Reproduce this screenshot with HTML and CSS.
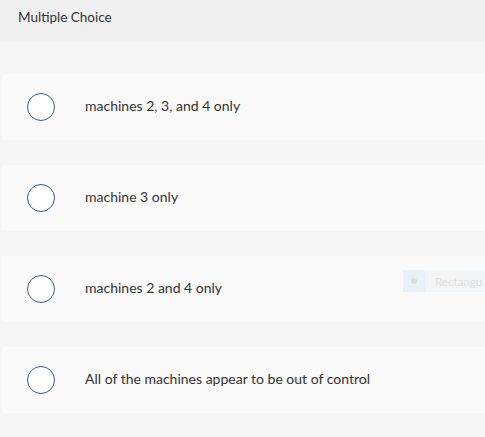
FILE: index.html
```html
<!DOCTYPE html>
<html>
<head>
<meta charset="utf-8">
<link rel="stylesheet" href="styles.css">
</head>
<body>
<div class="header">Multiple Choice</div>
<div class="choices">
  <div class="choice"><span class="radio"></span><span class="label">machines 2, 3, and 4 only</span></div>
  <div class="choice"><span class="radio"></span><span class="label">machine 3 only</span></div>
  <div class="choice"><span class="radio"></span><span class="label">machines 2 and 4 only</span>
    <div class="ghost"><span class="ghost-icon"><span class="ghost-dot"></span></span><span class="ghost-text">Rectangu</span></div>
  </div>
  <div class="choice"><span class="radio"></span><span class="label">All of the machines appear to be out of control</span></div>
</div>
</body>
</html>
```
FILE: styles.css
```css
html, body {
  margin: 0;
  padding: 0;
  background: #f5f5f5;
  overflow: hidden;
  font-family: Lato, "Open Sans", sans-serif;
}
.header {
  height: 42px;
  background: #f0f0f0;
  padding-left: 18px;
  box-sizing: border-box;
  font-size: 13.5px;
  line-height: 35px;
  color: #333;
}
.choices {
  padding-top: 32px;
  display: flex;
  flex-direction: column;
  gap: 25px;
  padding-left: 2px;
}
.choice {
  position: relative;
  height: 66px;
  width: 483px;
  background: #fafafa;
  border-radius: 3px 0 0 3px;
  display: flex;
  align-items: center;
  padding-left: 25px;
  box-sizing: border-box;
}
.radio {
  width: 28px;
  height: 28px;
  box-sizing: border-box;
  border: 1.5px solid #2f5f8f;
  border-radius: 50%;
  background: #fff;
  flex: none;
}
.label {
  margin-left: 30px;
  font-size: 14px;
  line-height: 16px;
  margin-top: -2px;
  color: #333;
}
.ghost {
  position: absolute;
  left: 401px;
  top: 14px;
  right: 0;
  height: 22px;
  display: flex;
  align-items: center;
  background: #f0f5fa;
  overflow: hidden;
}
.ghost-icon {
  width: 22px;
  height: 22px;
  background: #e8f1fa;
  display: flex;
  align-items: center;
  justify-content: center;
  flex: none;
}
.ghost-dot {
  width: 6px;
  height: 6px;
  border-radius: 50%;
  background: #dcdcdc;
}
.ghost-text {
  margin-left: 10px;
  font-size: 11.5px;
  color: #dedede;
  white-space: nowrap;
}
```
